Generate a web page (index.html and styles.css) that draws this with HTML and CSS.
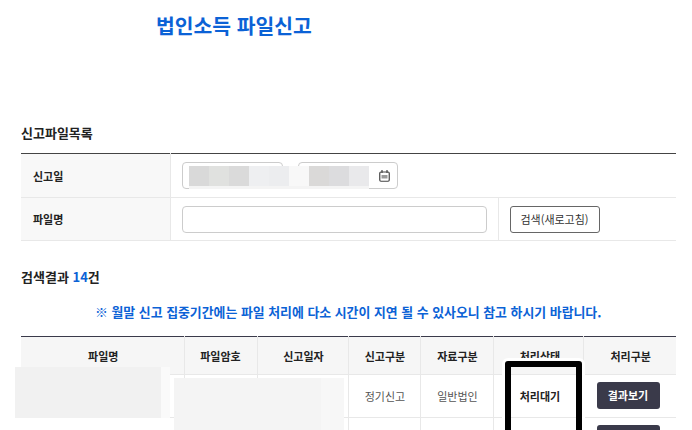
FILE: index.html
```html
<!DOCTYPE html>
<html lang="ko">
<head>
<meta charset="utf-8">
<title>법인소득 파일신고</title>
<link rel="stylesheet" href="styles.css">
</head>
<body>
<main class="page">
  <h1 class="title">법인소득 파일신고</h1>
  <h2 class="section">신고파일목록</h2>
  <table class="filter">
    <colgroup><col class="f1"><col class="f2"><col class="f3"></colgroup>
    <tr class="row-date">
      <th>신고일</th>
      <td colspan="2">
        <div class="dates">
          <span class="date"></span>
          <span class="date date-end">
            <svg class="cal" viewBox="0 0 11 12" width="11" height="12" aria-hidden="true">
              <rect x=".75" y="2" width="9.5" height="9.25" rx="1.2" fill="none" stroke="#444" stroke-width="1.2"/>
              <path d="M3 0v3M8 0v3" stroke="#444" stroke-width="1.2" fill="none"/>
              <rect x="2.5" y="5" width="6" height="3.5" fill="#999"/>
            </svg>
          </span>
        </div>
      </td>
    </tr>
    <tr>
      <th>파일명</th>
      <td class="name-cell"><span class="text-input"></span></td>
      <td class="btn-cell"><button class="search" type="button">검색(새로고침)</button></td>
    </tr>
  </table>

  <h2 class="section result">검색결과 <em>14</em>건</h2>
  <p class="notice">※ 월말 신고 집중기간에는 파일 처리에 다소 시간이 지연 될 수 있사오니 참고 하시기 바랍니다.</p>

  <table class="list">
    <thead>
      <tr>
        <th class="c1">파일명</th><th class="c2">파일암호</th><th class="c3">신고일자</th><th class="c4">신고구분</th><th class="c5">자료구분</th><th class="c6">처리상태</th><th class="c7">처리구분</th>
      </tr>
    </thead>
    <tbody>
      <tr>
        <td></td><td></td><td></td><td>정기신고</td><td>일반법인</td><td class="state">처리대기</td><td class="act"><button class="view" type="button">결과보기</button></td>
      </tr>
      <tr>
        <td></td><td></td><td></td><td></td><td></td><td></td><td class="act"><button class="view" type="button" aria-label="결과보기"></button></td>
      </tr>
    </tbody>
  </table>

  <div class="mosaic date-mosaic">
    <i class="m1"></i><i class="m2"></i><i class="m3"></i><i class="m4"></i><i class="m5"></i><i class="m6"></i><i class="m7"></i><i class="m8"></i><i class="m9"></i>
  </div>
  <div class="patch patch-a"></div>
  <div class="patch patch-b"></div>
  <div class="frame"></div>
</main>
</body>
</html>
```
FILE: styles.css
```css
* { box-sizing: border-box; }
html, body { margin: 0; height: 430px; overflow: hidden; background: #fff; }
body { font-family: "Noto Sans CJK KR", "Noto Sans", sans-serif; color: #222; font-size: 11px; }
.page { position: relative; width: 692px; height: 430px; padding: 0 16px 0 21px; overflow: hidden; }
.title { margin: 0; padding: 10px 0 0 135px; height: 124px; font-size: 20.4px; line-height: 30px; font-weight: 700; color: #0b62d6; }
.section { margin: 0; font-size: 13px; line-height: 18px; font-weight: 700; color: #222; }
.section em { font-style: normal; color: #0b62d6; }
table { border-collapse: collapse; table-layout: fixed; width: 655px; }
.filter { margin-top: 11px; border-top: 1px solid #444; }
.f1 { width: 149px; } .f2 { width: 328px; } .f3 { width: 178px; }
.filter tr { height: 43px; border-bottom: 1px solid #e8e8e8; }
.filter tr.row-date { height: 44px; }
.filter th { background: #f8f8f8; border-right: 1px solid #e8e8e8; text-align: left; padding: 0 0 0 12px; font-size: 11px; font-weight: 700; }
.filter td { padding: 0 0 0 11px; }
.filter td.name-cell { border-right: 1px solid #e8e8e8; }
.dates { display: flex; gap: 15px; align-items: center; height: 43px; }
.date { display: flex; align-items: center; justify-content: flex-end; width: 101px; height: 27px; border: 1px solid #ccc; border-radius: 4px; padding-right: 7px; }
.date-end { width: 100px; }
.text-input { display: block; width: 305px; height: 27px; border: 1px solid #ccc; border-radius: 4px; }
.search { display: block; width: 90px; height: 27px; background: #fff; border: 1px solid #666; border-radius: 3px; font: 11px "Noto Sans CJK KR", sans-serif; color: #333; padding: 0; }
.result { margin-top: 27px; }
.notice { margin: 17px 0 0; height: 18px; padding-left: 74px; font-size: 12.9px; line-height: 18px; font-weight: 700; color: #0b62d6; white-space: nowrap; }
.list { margin-top: 15px; border-top: 1px solid #3a3a4a; }
.list th { height: 38px; background: #f6f6f6; border-bottom: 1px solid #e8e8e8; border-left: 1px solid #e8e8e8; font-size: 11px; font-weight: 700; padding: 0 0 0 2px; }
.list th:first-child, .list td:first-child { border-left: 0; }
.list td { height: 43px; border-bottom: 1px solid #e8e8e8; border-left: 1px solid #e8e8e8; text-align: center; padding: 0 0 0 2px; color: #555; font-size: 11px; }
.list th.c2 { padding-left: 0; }
.list th.c6 { padding-left: 4px; }
.list td.state { color: #222; font-weight: 700; padding-left: 4px; }
.list td.act { text-align: left; padding-left: 13px; }
.c1 { width: 163px; } .c2 { width: 73px; } .c3 { width: 91px; } .c4 { width: 72px; } .c5 { width: 73px; } .c6 { width: 90px; } .c7 { width: 93px; }
.view { display: block; width: 63px; height: 27px; margin-bottom: 2px; background: #3a3a4a; border: 0; border-radius: 3px; color: #fff; font: 700 11px "Noto Sans CJK KR", sans-serif; padding: 0; }

.mosaic { position: absolute; left: 189px; top: 166px; display: flex; height: 23px; }
.mosaic i { display: block; width: 20px; height: 20px; box-shadow: 0 3px 0 #f4f4f4; }
.m1 { background: #d9d9d9; } .m2 { background: #e0e1df; } .m3 { background: #dadada; }
.m4 { background: #eeeff1; } .m5 { background: #ecedef; } .m6 { background: #f8f8f8; }
.m7 { background: #dad9d8; } .m8 { background: #dcdcde; } .m9 { background: #e9e9eb; }
.patch { position: absolute; }
.patch-a { left: 15px; top: 367px; width: 146px; height: 51px; background: #f1f1f1; box-shadow: 9px 0 0 #fafafa; }
.patch-b { left: 174px; top: 378px; width: 147px; height: 52px; background: #f4f4f4; box-shadow: 23px 0 0 #f7f7f7; }
.frame { position: absolute; left: 505px; top: 361px; width: 77px; height: 80px; border: 6px solid #000; border-radius: 3px; box-shadow: 0 0 0 3px #fff; }
```
